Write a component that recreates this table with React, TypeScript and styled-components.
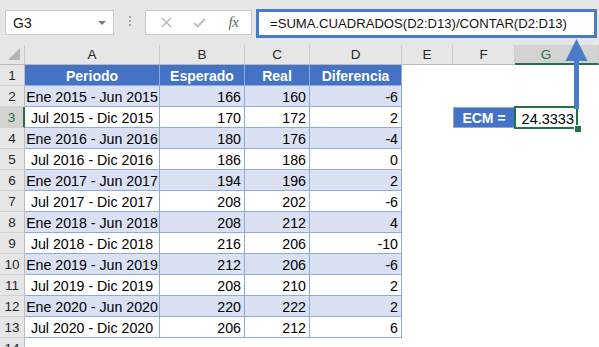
import styled, { createGlobalStyle } from "styled-components";

const BLUE = "#4472c4";
const ACCENT = "#4a7bcb";
const LIGHT = "#d9e1f2";
const LINE = "#8ea9db";
const GREEN = "#217346";

const rows: [string, number, number, number][] = [
  ["Ene 2015 - Jun 2015", 166, 160, -6],
  ["Jul 2015 - Dic 2015", 170, 172, 2],
  ["Ene 2016 - Jun 2016", 180, 176, -4],
  ["Jul 2016 - Dic 2016", 186, 186, 0],
  ["Ene 2017 - Jun 2017", 194, 196, 2],
  ["Jul 2017 - Dic 2017", 208, 202, -6],
  ["Ene 2018 - Jun 2018", 208, 212, 4],
  ["Jul 2018 - Dic 2018", 216, 206, -10],
  ["Ene 2019 - Jun 2019", 212, 206, -6],
  ["Jul 2019 - Dic 2019", 208, 210, 2],
  ["Ene 2020 - Jun 2020", 220, 222, 2],
  ["Jul 2020 - Dic 2020", 206, 212, 6],
];

const columns = ["A", "B", "C", "D", "E", "F", "G", ""];

function App() {
  return (
    <>
      <GlobalStyle />
      <StyledWindow>
        <StyledFormulaBar>
          <StyledNameBox>
            G3
            <StyledCaret />
          </StyledNameBox>
          <StyledGrip>
            <span />
            <span />
            <span />
          </StyledGrip>
          <StyledFxButtons>
            <StyledFxSlot>
              <svg width="11" height="11" viewBox="0 0 11 11">
                <path d="M1 1 L10 10 M10 1 L1 10" stroke="#b5b5b5" strokeWidth="1.4" fill="none" />
              </svg>
            </StyledFxSlot>
            <StyledFxSlot>
              <svg width="13" height="10" viewBox="0 0 13 10">
                <path d="M1 5 L4.5 8.5 L12 1" stroke="#c2c2c2" strokeWidth="2.2" fill="none" />
              </svg>
            </StyledFxSlot>
            <StyledFxSlot $wide>
              <StyledFx>fx</StyledFx>
            </StyledFxSlot>
          </StyledFxButtons>
          <StyledFormula>=SUMA.CUADRADOS(D2:D13)/CONTAR(D2:D13)</StyledFormula>
        </StyledFormulaBar>

        <StyledSheet>
          <StyledCorner>
            <svg width="13" height="13" viewBox="0 0 13 13">
              <polygon points="0,12 12,0 12,12" fill="#b4b4b4" />
            </svg>
          </StyledCorner>
          {columns.map((c, i) => (
            <StyledColHeader key={i} $active={c === "G" || c === ""}>
              {c}
            </StyledColHeader>
          ))}

          <StyledRowHeader>1</StyledRowHeader>
          <StyledCell $band="head" $align="center">Periodo</StyledCell>
          <StyledCell $band="head" $align="center">Esperado</StyledCell>
          <StyledCell $band="head" $align="center">Real</StyledCell>
          <StyledCell $band="head" $align="center">Diferencia</StyledCell>
          <StyledBlank />
          <StyledBlank />
          <StyledBlank />
          <StyledBlank />

          {rows.map((r, i) => {
            const n = i + 2;
            const band = n % 2 === 0 ? "light" : "plain";
            return (
              <Row key={n}>
                <StyledRowHeader $active={n === 3}>{n}</StyledRowHeader>
                <StyledCell $band={band} $align="center">{r[0]}</StyledCell>
                <StyledCell $band={band}>{r[1]}</StyledCell>
                <StyledCell $band={band}>{r[2]}</StyledCell>
                <StyledCell $band={band}>{r[3]}</StyledCell>
                <StyledBlank />
                {n === 3 ? (
                  <>
                    <StyledEcmLabel>ECM =</StyledEcmLabel>
                    <StyledEcmValue>24.3333</StyledEcmValue>
                  </>
                ) : (
                  <>
                    <StyledBlank />
                    <StyledBlank />
                  </>
                )}
                <StyledBlank />
              </Row>
            );
          })}

          <StyledRowHeader>14</StyledRowHeader>
        </StyledSheet>

        <StyledArrow width="30" height="72" viewBox="0 0 30 72">
          <rect x="9" y="18" width="5" height="52" fill={ACCENT} />
          <polygon points="11.5,0 22.5,22 0.5,22" fill={ACCENT} />
        </StyledArrow>
      </StyledWindow>
    </>
  );
}

function Row({ children }: { children: React.ReactNode }) {
  return <>{children}</>;
}

const GlobalStyle = createGlobalStyle`
  html, body {
    margin: 0;
    padding: 0;
    background: #ffffff;
    overflow: hidden;
  }
  body {
    font-family: "Liberation Sans", Arial, sans-serif;
  }
`;

const StyledWindow = styled.div`
  position: relative;
  width: 599px;
  height: 347px;
  overflow: hidden;
  background: #ffffff;
`;

const StyledFormulaBar = styled.div`
  display: flex;
  align-items: flex-start;
  height: 45px;
  box-sizing: border-box;
  padding: 9px 0 0 5px;
  background: #e6e6e6;
`;

const StyledNameBox = styled.div`
  position: relative;
  display: flex;
  align-items: center;
  width: 109px;
  height: 25px;
  margin-top: 1px;
  box-sizing: border-box;
  padding-left: 7px;
  background: #ffffff;
  border: 1px solid #c8c8c8;
  font-size: 14px;
  color: #222;
`;

const StyledCaret = styled.span`
  position: absolute;
  right: 7px;
  top: 10px;
  width: 0;
  height: 0;
  border-left: 4px solid transparent;
  border-right: 4px solid transparent;
  border-top: 4px solid #7a7a7a;
`;

const StyledGrip = styled.div`
  display: flex;
  flex-direction: column;
  align-items: center;
  gap: 2px;
  width: 31px;
  padding-top: 7px;

  span {
    width: 2px;
    height: 2px;
    background: #a0a0a0;
  }
`;

const StyledFxButtons = styled.div`
  display: flex;
  align-items: center;
  width: 107px;
  height: 25px;
  margin-top: 1px;
  box-sizing: border-box;
  padding-left: 4px;
  background: #ffffff;
  border: 1px solid #c8c8c8;
`;

const StyledFxSlot = styled.div<{ $wide?: boolean }>`
  display: flex;
  align-items: center;
  justify-content: center;
  width: ${(p) => (p.$wide ? 36 : 34)}px;
  height: 100%;
`;

const StyledFx = styled.span`
  font-family: "Liberation Serif", "Times New Roman", serif;
  font-style: italic;
  font-size: 15px;
  color: #666666;
  letter-spacing: -0.5px;
`;

const StyledFormula = styled.div`
  display: flex;
  align-items: center;
  width: 341px;
  height: 29px;
  margin-left: 4px;
  box-sizing: border-box;
  padding-left: 11px;
  background: #ffffff;
  border: 3px solid ${ACCENT};
  font-size: 13.1px;
  color: #111;
  white-space: nowrap;
`;

const StyledSheet = styled.div`
  display: grid;
  grid-template-columns: 25px 135px 85px 65px 92px 51px 62px 63px 1fr;
  grid-template-rows: 20px;
  grid-auto-rows: 21px;
  font-size: 14.2px;
  color: #000;
`;

const StyledCorner = styled.div`
  display: flex;
  align-items: flex-end;
  justify-content: flex-end;
  box-sizing: border-box;
  padding: 0 3px 3px 0;
  background: #e6e6e6;
  border-right: 1px solid #c6c6c6;
  border-bottom: 1px solid #b8b8b8;
`;

const StyledColHeader = styled.div<{ $active?: boolean }>`
  display: flex;
  align-items: center;
  justify-content: center;
  box-sizing: border-box;
  background: ${(p) => (p.$active ? "#d3d3d3" : "#e6e6e6")};
  border-right: 1px solid #cdcdcd;
  border-bottom: ${(p) => (p.$active ? `2px solid ${GREEN}` : "1px solid #b8b8b8")};
  font-size: 13.5px;
  color: ${(p) => (p.$active ? GREEN : "#262626")};
`;

const StyledRowHeader = styled.div<{ $active?: boolean }>`
  display: flex;
  align-items: center;
  justify-content: center;
  box-sizing: border-box;
  padding-top: 1px;
  background: ${(p) => (p.$active ? "#d3d3d3" : "#e6e6e6")};
  border-right: ${(p) => (p.$active ? `2px solid ${GREEN}` : "1px solid #bcbcbc")};
  border-bottom: 1px solid #d2d2d2;
  font-size: 13.5px;
  color: ${(p) => (p.$active ? GREEN : "#262626")};
`;

const StyledCell = styled.div<{ $band: "head" | "light" | "plain"; $align?: "center" }>`
  display: flex;
  align-items: center;
  justify-content: ${(p) => (p.$align === "center" ? "center" : "flex-end")};
  box-sizing: border-box;
  padding: 2px 3px 0 3px;
  white-space: nowrap;
  background: ${(p) => (p.$band === "head" ? BLUE : p.$band === "light" ? LIGHT : "#ffffff")};
  border-right: 1px solid ${LINE};
  border-bottom: 1px solid ${LINE};
  color: ${(p) => (p.$band === "head" ? "#ffffff" : "#000000")};
  font-weight: ${(p) => (p.$band === "head" ? 700 : 400)};
  font-size: ${(p) => (p.$band === "head" ? "14px" : "14.2px")};
`;

const StyledBlank = styled.div`
  background: #ffffff;
`;

const StyledEcmLabel = styled.div`
  display: flex;
  align-items: center;
  justify-content: center;
  box-sizing: border-box;
  padding-top: 1px;
  background: ${BLUE};
  border: 1px solid ${LINE};
  color: #ffffff;
  font-weight: 700;
  font-size: 14px;
`;

const StyledEcmValue = styled.div`
  position: relative;
  display: flex;
  align-items: center;
  justify-content: flex-end;
  box-sizing: border-box;
  padding: 2px 4px 0 0;
  font-size: 14.5px;

  &::before {
    content: "";
    position: absolute;
    left: -1px;
    top: -1px;
    right: 0;
    bottom: -1px;
    border: 2px solid ${GREEN};
  }

  &::after {
    content: "";
    position: absolute;
    right: -3px;
    bottom: -4px;
    width: 6px;
    height: 6px;
    background: ${GREEN};
    border-left: 1px solid #fff;
    border-top: 1px solid #fff;
  }
`;

const StyledArrow = styled.svg`
  position: absolute;
  left: 565px;
  top: 39px;
`;

export default App;
